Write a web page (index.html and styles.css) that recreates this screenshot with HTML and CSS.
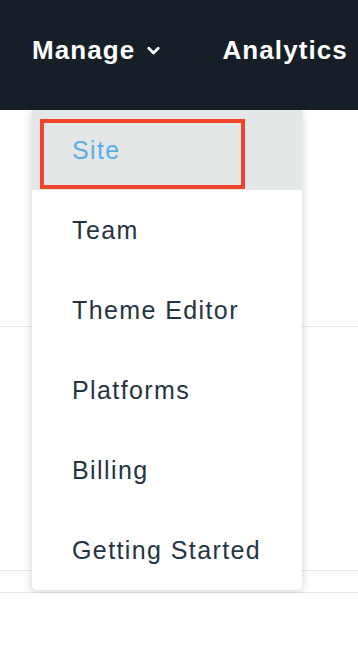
FILE: index.html
```html
<!DOCTYPE html>
<html lang="en">
<head>
    <meta charset="UTF-8">
    <meta name="viewport" content="width=device-width, initial-scale=1.0">
    <title>Manage</title>
    <link rel="stylesheet" href="styles.css">
</head>
<body>
<nav class="top-nav">
    <div class="nav-item nav-open">
        <span>Manage</span>
        <svg class="chevron" viewBox="0 0 13 10" width="13" height="10">
            <path d="M1.8 2.2 L6.5 6.9 L11.2 2.2" fill="none" stroke="#fff" stroke-width="2.8" stroke-linecap="round" stroke-linejoin="round"/>
        </svg>
        <ul class="dropdown">
            <li class="active">
                <span>Site</span>
                <div class="highlight-box"></div>
            </li>
            <li>Team</li>
            <li>Theme Editor</li>
            <li>Platforms</li>
            <li>Billing</li>
            <li>Getting Started</li>
        </ul>
    </div>
    <div class="nav-item">
        <span>Analytics</span>
        <svg class="chevron" viewBox="0 0 13 10" width="13" height="10">
            <path d="M1.8 2.2 L6.5 6.9 L11.2 2.2" fill="none" stroke="#fff" stroke-width="2.8" stroke-linecap="round" stroke-linejoin="round"/>
        </svg>
    </div>
</nav>

<div class="page-content">
    <div class="row row-top"></div>
    <div class="row row-middle"></div>
    <div class="row row-bottom"></div>
</div>
</body>
</html>
```

FILE: styles.css
```css
/* Global Styles */
body {
    font-family: 'Liberation Sans', Arial, sans-serif;
    background-color: #ffffff;
    margin: 0;
    padding: 0;
    overflow: hidden;
}

.top-nav {
    background-color: #161e28;
    height: 110px;
    display: flex;
    align-items: flex-start;
    gap: 62px;
    padding: 0 0 0 32px;
    white-space: nowrap;
}

.nav-item {
    position: relative;
    display: flex;
    align-items: center;
    gap: 12px;
    margin-top: 35px;
    color: white;
    font-size: 26px;
    font-weight: bold;
    letter-spacing: 1.1px;
    line-height: 30px;
}

.chevron {
    margin-top: 2px;
}

/* Dropdown */
.dropdown {
    position: absolute;
    top: 75px;
    left: 0;
    width: 270px;
    margin: 0;
    padding: 0;
    list-style: none;
    background-color: white;
    border-radius: 0 0 5px 5px;
    box-shadow: 0 2px 10px rgba(30, 45, 60, 0.22);
    z-index: 10;
}

.dropdown li {
    position: relative;
    height: 80px;
    display: flex;
    align-items: center;
    padding-left: 40px;
    font-size: 25px;
    font-weight: normal;
    letter-spacing: 1.4px;
    color: #253444;
}

.dropdown li.active {
    background-color: #e3e7e8;
    color: #5aaee6;
}

.highlight-box {
    position: absolute;
    top: 9px;
    left: 8px;
    width: 197px;
    height: 62px;
    border: 4px solid #ef4528;
}

/* Page content behind the menu */
.page-content {
    display: flex;
    flex-direction: column;
}

.row {
    border-bottom: 1px solid #e3e8e8;
}

.row-top {
    height: 216px;
}

.row-middle {
    height: 243px;
}

.row-bottom {
    height: 21px;
}
```
